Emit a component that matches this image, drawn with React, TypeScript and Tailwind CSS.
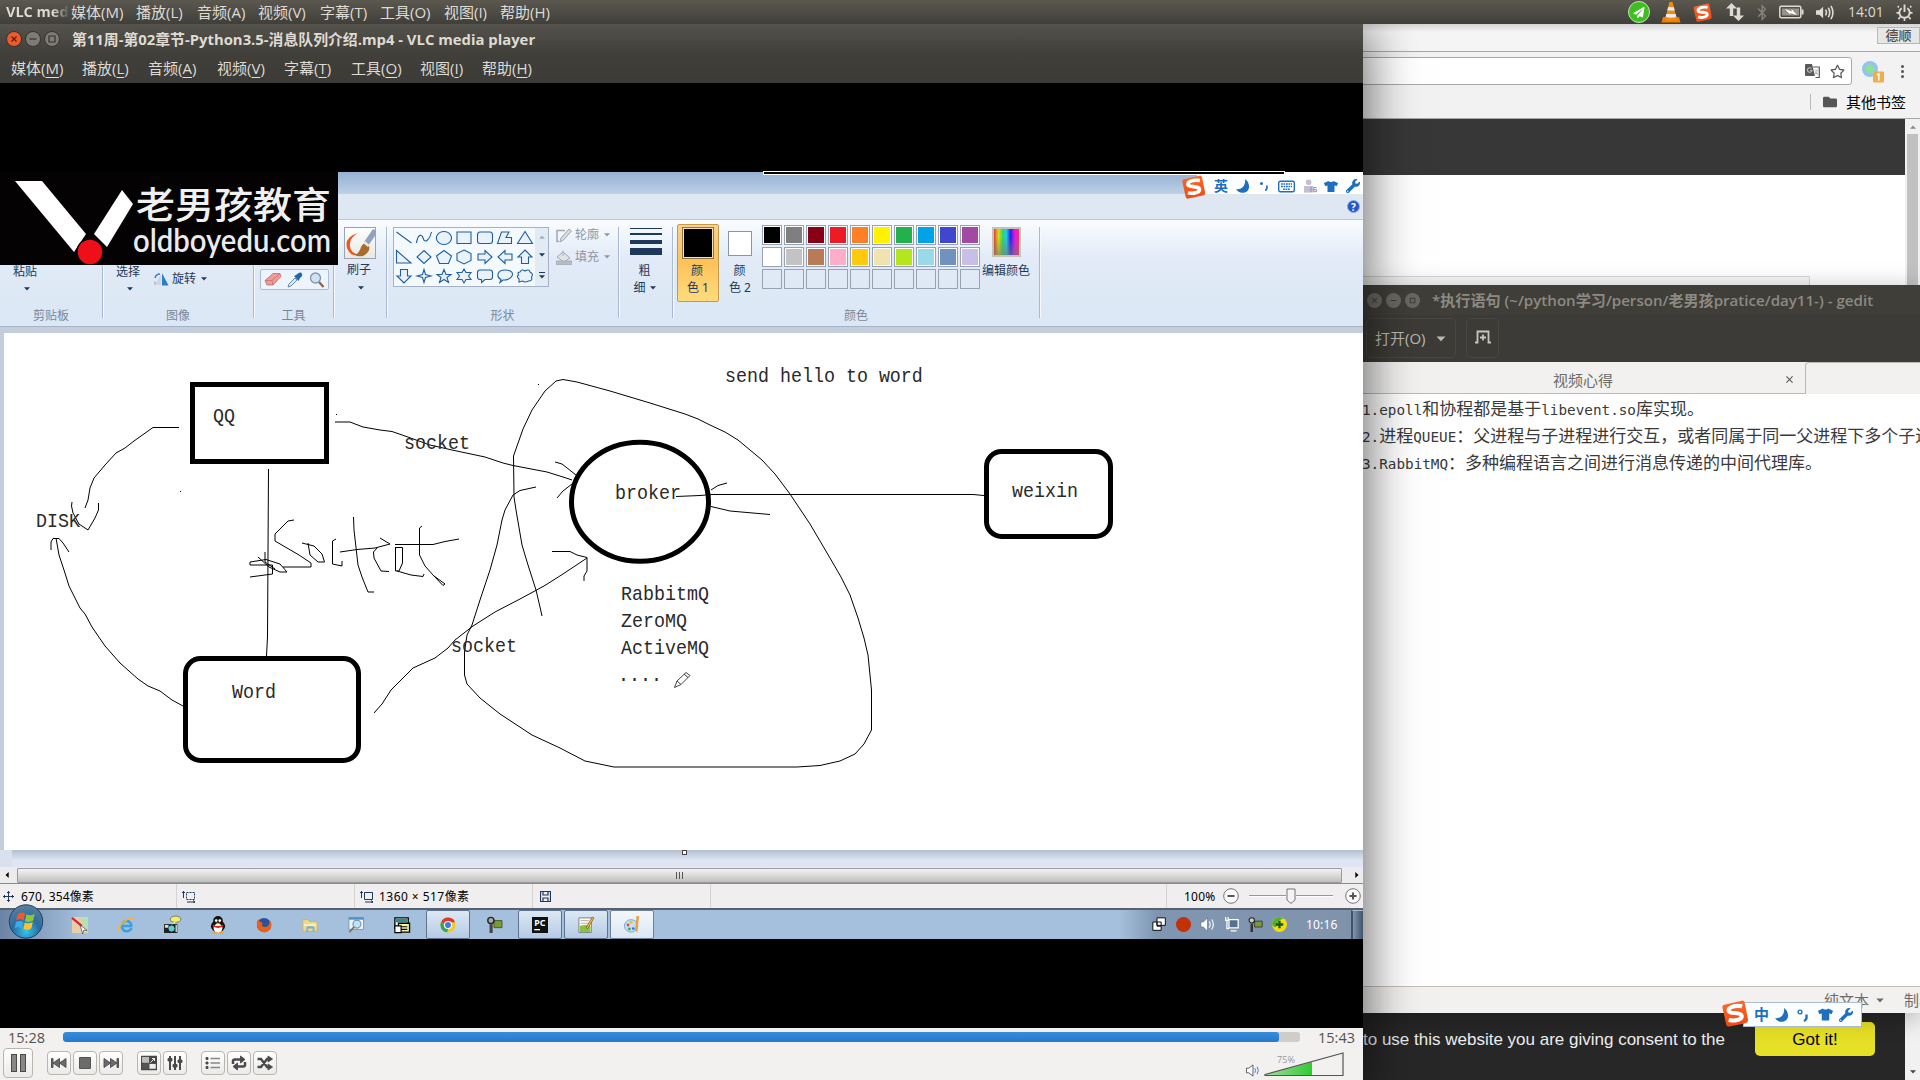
import React from "react";
import { FaTshirt, FaWrench, FaBluetoothB, FaRegStar, FaPaperPlane, FaFolder } from "react-icons/fa";

const UI = "font-['Open_Sans','Noto_Sans_CJK_SC',sans-serif]";
const WIN = "font-['Noto_Sans','Noto_Sans_CJK_SC',sans-serif]";

type IconProps = { className?: string };

function Sogou({ className = "" }: IconProps) {
  return (
    <svg viewBox="0 0 28 28" className={className}>
      <defs>
        <linearGradient id="sg" x1="0" y1="0" x2="0" y2="1">
          <stop offset="0" stopColor="#f9692f" />
          <stop offset="1" stopColor="#f04a12" />
        </linearGradient>
      </defs>
      <path d="M3 5 Q0.500 5.500 1 8 L5 26 Q6 28 8 27.500 L25 24 Q28 23 27.500 20 L24 2.500 Q23 0 21 0.800 Z" fill="url(#sg)" />
      <path d="M21.500 6.500 C13 5 6.500 8 7.500 11.500 C8.500 15 20.500 12 21 16.500 C21.500 20.500 13 22.500 7.500 20.500" fill="none" stroke="#fff" strokeWidth="4.200" />
    </svg>
  );
}

function Moon({ className = "" }: IconProps) {
  return (
    <svg viewBox="0 0 14 14" className={`h-[14px] w-[14px] shrink-0 ${className}`} fill="currentColor">
      <path d="M9 0C15 4 14.500 13.800 6.500 13.800C3.500 13.800 1 12 0.300 10C6 11 10 6 9 0Z" />
    </svg>
  );
}

function Caret({ className = "" }: IconProps) {
  return (
    <svg viewBox="0 0 6 4" className={`h-[4px] w-[6px] shrink-0 ${className}`}>
      <path d="M0 0.300H6L3 3.500Z" fill="currentColor" />
    </svg>
  );
}

/* ---------- Ubuntu panel ---------- */

const panelMenus: [string, string][] = [
  ["媒体(M)", "w-[65px]"],
  ["播放(L)", "w-[61px]"],
  ["音频(A)", "w-[61px]"],
  ["视频(V)", "w-[62px]"],
  ["字幕(T)", "w-[60px]"],
  ["工具(O)", "w-[64px]"],
  ["视图(I)", "w-[56px]"],
  ["帮助(H)", "w-[60px]"],
];

function TopPanel() {
  return (
    <div className={`absolute inset-x-0 top-0 z-20 flex h-[24px] items-center bg-gradient-to-b from-[#5b5850] to-[#403f3a] text-[15px] leading-[24px] text-[#dfdbd2] ${UI}`}>
      <div className="w-[71px] overflow-hidden whitespace-nowrap bg-gradient-to-r from-[#dfdbd2] from-75% to-transparent to-98% bg-clip-text pl-[6px] text-[14.500px] font-bold text-transparent">VLC med</div>
      {panelMenus.map(([t, w]) => (
        <div key={t} className={`${w} shrink-0 whitespace-nowrap`}>{t}</div>
      ))}
      <div className="ml-auto flex items-center">
        <div className="flex h-[22px] w-[22px] items-center justify-center rounded-full border border-[#bfe8b0] bg-[#3fbf1f]">
          <FaPaperPlane className="h-[11px] w-[12px] text-white" />
        </div>
        <svg viewBox="0 0 20 22" className="ml-[11px] h-[22px] w-[20px]">
          <path d="M2 16H18L19.500 21.500H0.500Z" fill="#ef7d00" />
          <path d="M8.500 1H11.500L16 18.500Q10 21 4 18.500Z" fill="#f28a12" />
          <path d="M7.200 6H12.800L13.700 9.500H6.300Z M5.300 13H14.700L15.300 16Q10 17.500 4.700 16Z" fill="#eee" />
        </svg>
        <Sogou className="ml-[12px] h-[19px] w-[19px]" />
        <svg viewBox="0 0 18 18" className="ml-[14px] h-[18px] w-[18px]" fill="#dfdbd2">
          <path d="M5.500 0L11 5.500H7.200V13H3.800V5.500H0Z M12.500 18L18 12.500H14.200V4.500H10.800V12.500H7Z" />
        </svg>
        <FaBluetoothB className="ml-[12px] h-[17px] w-[12px] text-[#85827a]" />
        <svg viewBox="0 0 25 14" className="ml-[11px] h-[14px] w-[25px]">
          <rect x="0.800" y="1.300" width="21" height="11.400" rx="1.500" fill="none" stroke="#dfdbd2" strokeWidth="1.500" />
          <rect x="3" y="3.500" width="17" height="7" fill="#96938b" />
          <path d="M22.500 4.500H24.500V9.500H22.500Z" fill="#dfdbd2" />
          <path d="M6 4L13 6.500L12.500 4L18 10L11 8L11.500 10Z" fill="#fff" />
        </svg>
        <svg viewBox="0 0 20 18" className="ml-[11px] h-[17px] w-[20px]" fill="none" stroke="#dfdbd2" strokeWidth="1.700">
          <path d="M0.500 6.500H4L8 3V15L4 11.500H0.500Z" fill="#dfdbd2" stroke="none" />
          <path d="M10.500 6Q12.500 9 10.500 12M13.500 4Q16.500 9 13.500 14M16.300 2Q20.500 9 16.300 16" />
        </svg>
        <span className="ml-[13px] w-[36px] whitespace-nowrap text-[14px]">14:01</span>
        <svg viewBox="0 0 18 18" className="ml-[12px] mr-[7px] h-[17px] w-[17px]" fill="none" stroke="#dfdbd2" strokeWidth="2">
          <path d="M6 4.500A5.500 5.500 0 1 0 12 4.500M9 0.500V8.500" />
          <path d="M3 3.500L1.800 2.300M15 3.500L16.200 2.300M3.500 9.500H0.500M14.500 9.500H17.500M4.500 14L2.500 16M13.500 14L15.500 16M9 15V18" strokeWidth="1.800" />
        </svg>
      </div>
    </div>
  );
}

/* ---------- Browser behind ---------- */

function Browser() {
  return (
    <div className="absolute left-[1340px] top-[24px] flex h-[1056px] w-[580px] flex-col bg-[#f2f2f2]">
      <div className="flex h-[28px] items-start justify-end border-b border-[#a8a8a8] bg-gradient-to-b from-[#d4d4d4] to-[#f5f5f5] to-30%">
        <div className={`mt-[3px] flex h-[17px] w-[43px] items-center justify-center border border-[#b8b8b8] bg-[#e6e6e6] text-[13px] font-medium leading-none text-[#4f4f4f] ${WIN}`}>德顺</div>
      </div>
      <div className="flex h-[38px] items-center">
        <div className="flex h-[28px] w-[512px] items-center justify-end rounded-r-[3px] border border-[#a8a8a8] bg-white">
          <svg viewBox="0 0 15 15" className="h-[15px] w-[15px]">
            <path d="M1 0H7L10 12H1Q0 12 0 11V1Q0 0 1 0Z" fill="#5a5a5a" />
            <path d="M8 3H14.300V13.500H10.500" fill="none" stroke="#5a5a5a" strokeWidth="1.200" />
            <path d="M6.500 4.500A2.300 2.300 0 1 0 7 6.500H5M9.500 6H13.500M12.500 6Q12 9 9.500 10.500M10 7.500L13 10.500" fill="none" stroke="#bbb" strokeWidth="1.100" />
          </svg>
          <FaRegStar className="ml-[10px] mr-[6px] h-[15px] w-[15px] text-[#5a5a5a]" />
        </div>
        <svg viewBox="0 0 24 24" className="ml-[9px] h-[24px] w-[24px]">
          <circle cx="9" cy="10" r="8" fill="#94c4ee" />
          <circle cx="9" cy="10" r="4.500" fill="#8be39a" />
          <rect x="12" y="12.500" width="11" height="11" rx="1" fill="#f0ad4e" />
          <path d="M16 16L17.800 14.800V21.500" fill="none" stroke="#fff" strokeWidth="1.500" />
        </svg>
        <div className="ml-[16px] flex flex-col gap-[2px]">
          <i className="h-[3px] w-[3px] rounded-full bg-[#555]" />
          <i className="h-[3px] w-[3px] rounded-full bg-[#555]" />
          <i className="h-[3px] w-[3px] rounded-full bg-[#555]" />
        </div>
      </div>
      <div className="flex h-[29px] items-center justify-end border-b border-[#a8a8a8] pb-[5px] pr-[14px]">
        <i className="mr-[12px] h-[16px] w-px bg-[#bbb]" />
        <FaFolder className="mr-[9px] h-[14px] w-[14px] text-[#555]" />
        <span className={`text-[15px] leading-[24px] text-black ${WIN}`}>其他书签</span>
      </div>
      <div className="flex h-[961px]">
        <div className="flex w-[565px] flex-col bg-white">
          <div className="h-[56px] bg-[#373737]" />
          <div className="h-[101px]" />
          <div className="h-[40px] w-[470px] border-r border-t border-[#d8d8d8] bg-[#f8f8f8]" />
          <div className="mt-auto flex h-[67px] items-start bg-[#272727]">
            <span className="ml-[23px] mt-[17px] whitespace-nowrap font-['Liberation_Sans',sans-serif] text-[17px] leading-[20px] text-[#eee]">to use this website you are giving consent to the</span>
            <div className="ml-auto mr-[30px] mt-[9px] flex h-[34px] w-[120px] items-center justify-center rounded-[5px] bg-[#e6e026] pt-[2px] font-['Liberation_Sans',sans-serif] text-[17px] text-black">Got it!</div>
          </div>
        </div>
        <div className="flex w-[15px] flex-col items-center bg-[#f1f1f1]">
          <Caret className="mt-[6px] rotate-180 text-[#8a8a8a]" />
          <div className="mt-[5px] h-[500px] w-[11px] bg-[#c1c1c1]" />
          <Caret className="mb-[6px] mt-auto text-[#444]" />
        </div>
      </div>
    </div>
  );
}

/* ---------- gedit ---------- */

function Seg({ children }: { children: React.ReactNode }) {
  return <span className="font-['DejaVu_Sans_Mono',monospace] text-[14.300px] leading-[20px]">{children}</span>;
}

function Gedit() {
  const dot = "flex h-[15px] w-[15px] items-center justify-center rounded-full bg-[#696862]";
  return (
    <div className={`absolute left-[1363px] top-[285px] flex h-[728px] w-[557px] flex-col bg-white shadow-[0_4px_24px_rgba(0,0,0,0.28)] ${UI}`}>
      <div className="flex h-[30px] shrink-0 items-center overflow-hidden bg-[#3f3e39] pl-[4px]">
        <div className="flex gap-[4px]">
          {["M2 2L6 6M6 2L2 6", "M1.500 4H6.500", "M2 2H6V6H2Z"].map((d) => (
            <i key={d} className={dot}>
              <svg viewBox="0 0 8 8" className="h-[9px] w-[9px]" fill="none" stroke="#3c3b37" strokeWidth="0.900"><path d={d} /></svg>
            </i>
          ))}
        </div>
        <span className="ml-[12px] whitespace-nowrap text-[15.100px] font-semibold leading-[28px] text-[#8d8a82]">*执行语句 (~/python学习/person/老男孩pratice/day11-) - gedit</span>
      </div>
      <div className="flex h-[47px] shrink-0 items-start bg-[#3c3b37] pt-[3px] text-[#bdb9b0]">
        <div className="ml-[3px] flex h-[40px] w-[90px] items-center rounded-[5px] border border-[#484741] pl-[8px] text-[15px]">
          打开(O)<Caret className="ml-[10px] mt-[2px] !h-[6px] !w-[10px]" />
        </div>
        <div className="ml-[10px] flex h-[40px] w-[33px] items-center justify-center rounded-[5px] border border-[#484741] pb-[2px]">
          <svg viewBox="0 0 16 14" className="h-[14px] w-[16px]" fill="none" stroke="#c9c5bc" strokeWidth="1.800"><path d="M0 12.500H2.500V1.500H13.500V12.500H16M8 4.500V10.500M5 7.500H11" /></svg>
        </div>
      </div>
      <div className="flex h-[32px] shrink-0 bg-[#f2f1f0]">
        <div className="flex w-[442px] items-center border-b border-[#bdb9b3] pl-[190px] text-[15px] text-[#6e6c68]">
          <span className="mt-[4px] leading-[20px]">视频心得</span>
          <svg viewBox="0 0 8 8" className="ml-auto mr-[12px] mt-[3px] h-[7px] w-[7px]" stroke="#555" strokeWidth="1.200"><path d="M0.500 0.500L7.500 7.500M7.500 0.500L0.500 7.500" /></svg>
        </div>
        <div className="flex-1 rounded-tl-[4px] border-l border-t border-[#bdb9b3]" />
      </div>
      <div className="min-h-0 flex-1 overflow-hidden text-[17px] leading-[27px] text-[#3a3a3a]">
        <div className="-ml-px mt-px h-[27px] whitespace-nowrap"><Seg>1.epoll</Seg>和协程都是基于<Seg>libevent.so</Seg>库实现。</div>
        <div className="-ml-px h-[27px] whitespace-nowrap"><Seg>2.</Seg>进程<Seg>QUEUE</Seg>：父进程与子进程进行交互，或者同属于同一父进程下多个子进程</div>
        <div className="-ml-px h-[27px] whitespace-nowrap"><Seg>3.RabbitMQ</Seg>：多种编程语言之间进行消息传递的中间代理库。</div>
      </div>
      <div className="flex h-[27px] shrink-0 items-center overflow-hidden whitespace-nowrap border-t border-[#c5bfb9] bg-[#f2f1f0] text-[15px] text-[#6e6c68]">
        <span className="ml-[461px] w-[45px] shrink-0">纯文本</span>
        <Caret className="ml-[6px] !h-[5px] !w-[10px]" />
        <span className="ml-[19px] shrink-0">制表符宽度</span>
      </div>
    </div>
  );
}

function ImeBar() {
  return (
    <div className="absolute left-[1721px] top-[999px] z-10 flex h-[28px] w-[141px] items-end">
      <Sogou className="z-10 h-[27px] w-[28px] shrink-0" />
      <div className={`-ml-[6px] flex h-[25px] w-[119px] items-center border border-[#a9bcd0] bg-[#fcfdff] pl-[10px] text-[#1d6fc0] ${WIN}`}>
        <span className="w-[21px] shrink-0 text-[15px] font-bold leading-none">中</span>
        <Moon />
        <svg viewBox="0 0 12 14" className="ml-[8px] h-[14px] w-[12px] shrink-0"><circle cx="3" cy="4" r="1.900" fill="none" stroke="currentColor" strokeWidth="1.400" /><path d="M9.500 6.500V10Q9.500 12 7 13" fill="none" stroke="currentColor" strokeWidth="2.400" /></svg>
        <FaTshirt className="ml-[9px] h-[15px] w-[15px] shrink-0" />
        <FaWrench className="ml-[6px] h-[14px] w-[14px] shrink-0 -scale-x-100 rotate-90" />
      </div>
    </div>
  );
}

/* ---------- VLC ---------- */

const vlcMenus: [string, string, string][] = [
  ["媒体", "M", "w-[71px]"],
  ["播放", "L", "w-[66px]"],
  ["音频", "A", "w-[69px]"],
  ["视频", "V", "w-[67px]"],
  ["字幕", "T", "w-[67px]"],
  ["工具", "O", "w-[69px]"],
  ["视图", "I", "w-[62px]"],
  ["帮助", "H", "w-[60px]"],
];

function VlcHeader() {
  const b = "flex h-[16px] w-[16px] items-center justify-center rounded-full border border-[#33322e]";
  return (
    <div className={`flex h-[59px] shrink-0 flex-col bg-gradient-to-b from-[#55534c] via-[#403f3a] to-[#3c3b37] text-[#dfdbd2] ${UI}`}>
      <div className="flex h-[29px] items-center pl-[6px]">
        <div className="flex gap-[3px]">
          <i className={`${b} bg-[#ee5a2b]`}><svg viewBox="0 0 8 8" className="h-[8px] w-[8px]" stroke="#5d1f0a" strokeWidth="1.300"><path d="M1.500 1.500L6.500 6.500M6.500 1.500L1.500 6.500" /></svg></i>
          <i className={`${b} bg-[#7d7b73]`}><svg viewBox="0 0 8 8" className="h-[8px] w-[8px]" stroke="#33322e" strokeWidth="1.200"><path d="M0.500 4H7.500" /></svg></i>
          <i className={`${b} bg-[#7d7b73]`}><svg viewBox="0 0 8 8" className="h-[8px] w-[8px]" fill="none" stroke="#33322e" strokeWidth="1.200"><path d="M1 1H7V7H1Z" /></svg></i>
        </div>
        <span className="ml-[12px] mt-px whitespace-nowrap text-[14.850px] font-bold leading-[20px]">第11周-第02章节-Python3.5-消息队列介绍.mp4 - VLC media player</span>
      </div>
      <div className="flex h-[29px] items-center pl-[11px] text-[15px] leading-[24px]">
        {vlcMenus.map(([t, k, w]) => (
          <div key={k} className={`${w} whitespace-nowrap`}>{t}(<span className="underline underline-offset-[3px]">{k}</span>)</div>
        ))}
      </div>
    </div>
  );
}

function Group({ w, label, children }: { w: string; label: string; children?: React.ReactNode }) {
  return (
    <div className={`${w} mt-[7px] flex h-[91px] shrink-0 flex-col border-r border-[#a9bad0] shadow-[1px_0_0_#f6f9fd]`}>
      <div className="h-[79px] shrink-0">{children}</div>
      <div className="h-[20px] text-center text-[12px] leading-[20px] text-[#7a8799]">{label}</div>
    </div>
  );
}

const shapes = [
  "M0.500 1L15.500 12", "M0.500 12C2 2 6 3 7.500 8S14 8 15.500 1", "M8 0.500A7.500 6.500 0 1 1 7.900 0.500Z", "M1 1H15V12.500H1Z", "M3 1H13Q15.500 1 15.500 4V10Q15.500 12.500 13 12.500H3Q0.500 12.500 0.500 10V4Q0.500 1 3 1Z", "M0.500 12.500L4.500 1H12L9 6.500H14.500V12.500Z", "M8 0.500L15.500 12.500H0.500Z",
  "M0.500 0.500V13L15 13Z", "M8 0.500L15 7L8 13.500L1 7Z", "M8 0.500L15.500 6L12.500 13.500H3.500L0.500 6Z", "M8 0L15 3.500V10.500L8 14L1 10.500V3.500Z", "M1 4H8V0.500L15 7L8 13.500V10H1Z", "M15 4H8V0.500L1 7L8 13.500V10H15Z", "M8 0L15 7H11.500V13.500H4.500V7H1Z",
  "M8 14L1 7H4.500V0.500H11.500V7H15Z", "M8 0.500L9.500 5.500L15 7L9.500 8.500L8 13.500L6.500 8.500L1 7L6.500 5.500Z", "M8 0.500L10 5.500H15L11 8.500L12.500 13.500L8 10.500L3.500 13.500L5 8.500L1 5.500H6Z", "M8 0L10 3.500H15L12.500 7L15 10.500H10L8 14L6 10.500H1L3.500 7L1 3.500H6Z", "M3 1H13Q15.500 1 15.500 3.500V8Q15.500 10.500 13 10.500H8L4.500 13.500V10.500H3Q0.500 10.500 0.500 8V3.500Q0.500 1 3 1Z", "M4 10.500C-1 8 0 1 8 1S16 5 15 7S10 11.500 6 11L3 13.500Z", "M3 3Q5 -0.500 8 2Q12 -0.500 13 3Q17 5 14.500 8Q16 12 11.500 12Q8 14 5.500 12L2 13V10Q-1 7.500 1.500 6Q0 3 3 3Z",
];

const palette = [
  ["bg-[#000000]", "bg-[#7f7f7f]", "bg-[#880015]", "bg-[#ed1c24]", "bg-[#ff7f27]", "bg-[#fff200]", "bg-[#22b14c]", "bg-[#00a2e8]", "bg-[#3f48cc]", "bg-[#a349a4]"],
  ["bg-[#ffffff]", "bg-[#c3c3c3]", "bg-[#b97a57]", "bg-[#ffaec9]", "bg-[#ffc90e]", "bg-[#efe4b0]", "bg-[#b5e61d]", "bg-[#99d9ea]", "bg-[#7092be]", "bg-[#c8bfe7]"],
];

function Ribbon() {
  return (
    <div className="flex h-[108px] shrink-0 border-b border-t border-[#a7b4c6] border-t-[#bcc6d6] bg-gradient-to-b from-[#fafdff] via-[#e2ebf7] via-35% to-[#dbe7f5] text-[12px] leading-[16px] text-[#1e395b]">
      <Group w="w-[103px]" label="剪贴板">
        <div className="flex flex-col pl-[13px] pr-[40px] pt-[37px]">
          <span className="h-[16px]">粘贴</span>
          <Caret className="ml-[11px] mt-[7px]" />
        </div>
      </Group>
      <Group w="w-[151px]" label="图像">
        <div className="flex pl-[13px] pt-[37px]">
          <div className="flex w-[24px] flex-col items-center whitespace-nowrap">
            <span className="h-[16px]">选择</span>
            <Caret className="ml-[4px] mt-[7px]" />
          </div>
          <div className="ml-[14px] mt-[7px] flex h-[16px] items-center">
            <svg viewBox="0 0 15 14" className="h-[14px] w-[15px]">
              <path d="M0 13V9L6 13Z" fill="#b9c3cf" /><path d="M8 1V13.500H14.500Z" fill="#2d7fc0" /><path d="M7 2V13H1Z" fill="#cfd8e2" /><path d="M1 6Q2 2 6 2" fill="none" stroke="#3b7fc4" strokeWidth="1.500" />
            </svg>
            <span className="ml-[3px]">旋转</span>
            <Caret className="ml-[5px]" />
          </div>
        </div>
      </Group>
      <Group w="w-[80px]" label="工具">
        <div className="flex pl-[6px] pt-[42px]">
          <div className="flex h-[21px] w-[69px] items-center justify-around rounded-[2px] border border-[#aebccf] bg-[#eef4fb]">
            <svg viewBox="0 0 18 14" className="h-[15px] w-[18px]"><path d="M1 8L9 1H16L17 4L9 12.500H3Z" fill="#ee9c98" stroke="#c46a66" strokeWidth="0.800" /><path d="M1 8H8L9 12.500M8 8L16 1" stroke="#c46a66" strokeWidth="0.700" fill="none" /></svg>
            <svg viewBox="0 0 16 16" className="h-[16px] w-[16px]"><path d="M1 15L2 12L8 6L10 8L4 14Z" fill="#dfe9f5" stroke="#5c7da5" strokeWidth="0.900" /><path d="M7 4L9 3L11 1.500Q14 -0.500 15 2Q16 4 13 6L11.500 9Z" fill="#1e66b5" /></svg>
            <svg viewBox="0 0 16 16" className="h-[16px] w-[16px]"><path d="M10 10L14.500 15" stroke="#8a6b4e" strokeWidth="2.400" /><circle cx="6.500" cy="6" r="5" fill="#cfe3f5" stroke="#8394a8" strokeWidth="1.300" /></svg>
          </div>
        </div>
      </Group>
      <Group w="w-[53px]" label="">
        <div className="flex flex-col items-center pr-px">
          <div className="h-[32px] w-[32px] border border-[#9aa5b3] bg-gradient-to-b from-white to-[#e6e9e2]">
            <svg viewBox="0 0 30 30" className="h-[30px] w-[30px]">
              <path d="M13 5Q-1 9 2 20Q5 29 15 27Q5 25 5 18Q4 10 13 5Z" fill="#f0561d" />
              <path d="M19 14L28 1L30 2V8L23 18Z" fill="#8fa3bd" /><path d="M16 19Q20 12 24 18Q26 24 18 28Q12 29 10 27Q15 24 16 19Z" fill="#a86d2d" /><path d="M18 15L20 13L24.500 17L23 19Z" fill="#e8e8ea" />
            </svg>
          </div>
          <span className="mt-[3px] h-[16px] pr-px">刷子</span>
          <Caret className="ml-[3px] mt-[8px]" />
        </div>
      </Group>
      <Group w="w-[232px]" label="形状">
        <div className="flex pl-[6px]">
          <div className="flex h-[60px] w-[156px] border border-[#a3b2c8] bg-[#f4f9fe]">
            <div className="grid w-[141px] grid-cols-7 grid-rows-3 place-items-center">
              {shapes.map((d, i) => (
                <svg key={i} viewBox="0 0 16 14" className="h-[14px] w-[16px] overflow-visible" fill="#e9f2fb" stroke="#1f5fa0" strokeWidth="1.100"><path d={d} fill={i < 2 ? "none" : undefined} /></svg>
              ))}
            </div>
            <div className="flex w-[13px] flex-col items-center justify-around bg-[#e2eaf4]">
              <Caret className="rotate-180 text-[#a5b0bf]" />
              <Caret />
              <div className="flex flex-col items-center gap-[2px]"><i className="h-px w-[6px] bg-[#1e395b]" /><Caret /></div>
            </div>
          </div>
          <div className="ml-[7px] flex flex-col gap-[6px] text-[#9097a1]">
            <div className="flex items-center">
              <svg viewBox="0 0 16 15" className="h-[15px] w-[16px]" fill="none" stroke="#a1a7b0"><path d="M9 2.500H1V13.500H3" strokeWidth="1.500" /><path d="M4 14L5 10L13 1L15.500 3L7.500 12Z" fill="#d7dce4" /></svg>
              <span className="ml-[3px]">轮廓</span><Caret className="ml-[5px]" />
            </div>
            <div className="flex items-center">
              <svg viewBox="0 0 16 15" className="h-[15px] w-[16px]"><path d="M1 7L7 2L14 8L8 12Z" fill="#dfe4eb" stroke="#a1a7b0" /><path d="M7 6V0.500M0 11H16V15H0Z" stroke="#a1a7b0" fill="#b7bdc6" strokeWidth="0.800" /></svg>
              <span className="ml-[3px]">填充</span><Caret className="ml-[5px]" />
            </div>
          </div>
        </div>
      </Group>
      <Group w="w-[54px]" label="">
        <div className="flex flex-col items-center pt-px">
          <div className="flex w-[32px] flex-col">
            <i className="h-px bg-[#1e395b]" /><i className="mt-[4px] h-[2px] bg-[#1e395b]" /><i className="mt-[5px] h-[4px] bg-[#1e395b]" /><i className="mt-[4px] h-[7px] bg-[#1e395b]" />
          </div>
          <span className="mr-[2px] mt-[8px] h-[16px]">粗</span>
          <div className="mr-[2px] mt-px flex items-center">细<Caret className="ml-[4px]" /></div>
        </div>
      </Group>
      <Group w="w-[367px]" label="颜色">
        <div className="flex items-start pl-[4px]">
          <div className="-mt-[3px] flex h-[78px] w-[42px] flex-col items-center rounded-[2px] border border-[#c29a4a] bg-gradient-to-b from-[#f9d08b] via-[#fdc25a] to-[#ffdc7e] pt-[2px]">
            <div className="h-[32px] w-[32px] border border-[#8b7440] bg-black outline outline-1 -outline-offset-2 outline-[#f5e0b8]" />
            <span className="mr-[2px] mt-[4px] h-[17px]">颜</span>
            <span className="h-[16px]">色 1</span>
          </div>
          <div className="ml-[4px] flex w-[34px] flex-col items-center pt-[4px]">
            <div className="h-[25px] w-[24px] border border-[#8a94a3] bg-white" />
            <span className="mr-px mt-[7px] h-[17px]">颜</span>
            <span className="h-[16px]">色 2</span>
          </div>
          <div className="-mt-[2px] ml-[5px] flex flex-col gap-[2px]">
            {[0, 1, 2].map((r) => (
              <div key={r} className="flex gap-[2px]">
                {palette[0].map((_, c) => (
                  <div key={c} className="flex h-[20px] w-[20px] border border-[#98a2b2] p-px">
                    {r < 2 ? <i className={`h-[16px] w-[16px] ${palette[r][c]} outline outline-1 outline-white`} /> : null}
                  </div>
                ))}
              </div>
            ))}
          </div>
          <div className="ml-px flex w-[50px] flex-col items-center whitespace-nowrap">
            <div className="h-[30px] w-[29px] border-2 border-[#c9c1b6] bg-[linear-gradient(90deg,#e0402a,#d8d820_18%,#2fd860_35%,#22c8e8_50%,#2a20e8_66%,#e818e0_84%,#f03070)]">
              <div className="h-full w-full bg-gradient-to-b from-transparent from-30% to-[#77777799]" />
            </div>
            <span className="mt-[6px] h-[16px]">编辑颜色</span>
          </div>
        </div>
      </Group>
    </div>
  );
}

function PaintHeader() {
  return (
    <div className="relative flex shrink-0 flex-col">
      <div className="flex h-[22px] justify-end bg-gradient-to-b from-[#96b1d2] to-[#bdd0e8]">
        <div className="flex h-[22px] items-start bg-gradient-to-r from-transparent from-10% to-white to-10%">
          <Sogou className="z-10 mt-[3px] h-[24px] w-[29px] shrink-0" />
          <div className="mt-[4px] flex h-[20px] w-[155px] items-center text-[#1d6fc0]">
            <span className="ml-[6px] w-[22px] shrink-0 text-[14px] font-bold leading-none">英</span>
            <Moon />
            <svg viewBox="0 0 12 14" className="ml-[9px] h-[14px] w-[10px] shrink-0"><circle cx="3" cy="4" r="1.800" fill="currentColor" /><path d="M9.500 6.500V9.500Q9.500 11 7.500 12.500" fill="none" stroke="currentColor" strokeWidth="2" /></svg>
            <svg viewBox="0 0 17 12" className="ml-[9px] h-[13px] w-[17px] shrink-0"><rect x="0.700" y="0.700" width="15.600" height="10.600" rx="1.500" fill="none" stroke="#1d6fc0" strokeWidth="1.400" /><path d="M3 3.500H14M3 6H14M5 8.700H12" stroke="#1d6fc0" strokeWidth="1.500" strokeDasharray="1.800 0.700" /></svg>
            <svg viewBox="0 0 16 15" className="ml-[8px] h-[15px] w-[15px] shrink-0" fill="#c2bfd2"><circle cx="6" cy="3" r="3" /><path d="M1 7H11V14H1Z" /><path d="M8.500 8V13.500M14.500 8.500H11.500V13H14.500V10.800H11.500" stroke="#8e8aa8" fill="none" /></svg>
            <FaTshirt className="ml-[6px] h-[15px] w-[14px] shrink-0" />
            <FaWrench className="ml-[8px] h-[14px] w-[14px] shrink-0 -scale-x-100 rotate-90" />
          </div>
        </div>
      </div>
      <div className="flex h-[25px] items-center justify-end bg-[#dfe7f3] pr-[3px]">
        <i className="flex h-[13px] w-[13px] items-center justify-center rounded-full border border-[#8fa9dc] bg-[#2458c9] text-[10px] font-bold not-italic leading-none text-white">?</i>
      </div>
      <div className="absolute -top-px left-[763px] h-[4px] w-[522px] border border-white bg-black" />
      <div className="absolute left-0 top-0 z-10 flex h-[93px] w-[338px] bg-[#050203]">
        <svg viewBox="0 0 133 93" className="h-[93px] w-[133px] shrink-0">
          <path d="M15 9H42L86 62L74 80Z" fill="#fff" /><path d="M122 18L133 32L107 75L94 62Z" fill="#fff" /><circle cx="90" cy="80" r="13" fill="#ee1019" stroke="#050203" strokeWidth="1.500" />
        </svg>
        <svg viewBox="0 0 205 93" className="h-[93px] w-[205px] shrink-0 font-['Lato','Noto_Sans_CJK_SC',sans-serif]">
          <text x="3" y="47" fontSize="37" fontWeight="500" textLength="195" lengthAdjust="spacingAndGlyphs" fill="#f0f0f0">老男孩教育</text>
          <text x="0" y="80" fontSize="32" fontWeight="600" textLength="198" lengthAdjust="spacingAndGlyphs" fill="#ebebeb">oldboyedu.com</text>
        </svg>
      </div>
    </div>
  );
}

function Label({ x, y, children }: { x: number; y: number; children: string }) {
  return (
    <text transform={`translate(${x} ${y}) scale(1 1.080)`} fontSize={18.330} className="whitespace-pre font-['Liberation_Mono',monospace]" fill="#2a2a2a">{children}</text>
  );
}

const strokes = [
  "M268.500 469L267.500 637L266.500 656",
  "M179 427.500H153L134 441L125 448L116 453L105 465L94 478L90 488L88 500L85 508",
  "M72 502L71.500 506L73 513L79 524L88 530L95 518L98.500 510V503",
  "M188 712L183 706L172 700L160 691L148 686L138 679L120 663L105 646L92 627L85 614L80 608L69 586L64 570L59 555L56 538",
  "M51 550V542L53 538.500H59L63 543L69 552",
  "M335 422H350L363 427L380 430L392 431.500L405 436L430 445L452 450L485 457L503 463L513 465.500L547 472L563 477L572 480",
  "M555 462L562 464L576 475M557 498L563 491L572 484",
  "M294 520L288 521L275 534V541L299 555L311 563V567H283",
  "M302 543L314 546L322 554L324.500 562L318 562L310 555L308 543",
  "M336 539L332.500 541V564L342 566V561",
  "M353.500 517L354 530L358 565L362 577L368 592H374M340 552L357 549.500L375 548L390 544L380 538",
  "M377 548L373.500 552L374 558L381 571L389 571.500",
  "M395 547.500H402.500V563L399 571L395.500 571V547.500M397 571L411 575L423 576.500L424 574",
  "M422 526L419.500 528V555L425 566L433 575L443 585.500L445 584L434 576M395 544.500H433L445 541.500L459 539",
  "M250 565V562L266 559.500L280 564L287 572H280L269 567L258 557M250 565H272.500V574L250 577M265 552V562L275 569",
  "M374 713L382 704L391 690L402 679L413 668L435 658L448 648L455 640L473 626L495 612L520 599L544 586L563 574L587 558",
  "M552 551.500H570L577 555L587 557.500V571L584 576V581",
  "M542 616L540 607L536 590L528 565L522 545L516 510L514 497L513.500 456L523 429L532 410L545 391L556 381L563 379.500L577 382L610 391L650 403L685 414L698 419L710 425L725 432L738 440L762 460L775 474L790 494L810 524L830 558L841 577L850 595L858 618L864 638L868 655L871.500 690V730L864 744L855 754L840 761L820 765.500L797 767H614L585 761L560 748L532 735L500 714L480 698L467 684L464.500 675V652L467 635L472 625L480 600L490 570L497 545L502 520L505 510L513 495L520 490.500L536 487",
  "M676 496.500L700 495.500L712 494.500H973L984 495.500",
  "M711 490L718 485.500L727 483M711 506.500L730 511L770 514.500",
];

function Canvas() {
  return (
    <div className="flex h-[523px] shrink-0 flex-col bg-[#c4cddc] pl-[4px] pt-[6px]">
      <svg viewBox="4 333 1359 517" className="h-[517px] w-[1359px] bg-white">
        <g fill="none" stroke="#000" strokeWidth="5">
          <rect x="192.500" y="384.500" width="134" height="77" />
          <rect x="185.500" y="658.500" width="173" height="102" rx="15" />
          <rect x="986.500" y="451.500" width="124" height="85" rx="15" />
          <ellipse cx="640" cy="501.800" rx="68.500" ry="59.500" />
        </g>
        <g fill="none" stroke="#000" strokeWidth="1">
          {strokes.map((d) => <path key={d} d={d} />)}
        </g>
        <path d="M180 491h1v1h-1zM336 414h1v1h-1zM538 384h1v1h-1z" />
        <Label x={213} y={422}>QQ</Label>
        <Label x={36} y={527}>DISK</Label>
        <Label x={232} y={698}>Word</Label>
        <Label x={404} y={449}>socket</Label>
        <Label x={451} y={652}>socket</Label>
        <Label x={615} y={499}>broker</Label>
        <Label x={621} y={600}>RabbitmQ</Label>
        <Label x={621} y={627}>ZeroMQ</Label>
        <Label x={621} y={654}>ActiveMQ</Label>
        <Label x={618} y={681}>....</Label>
        <Label x={725} y={382}>send hello to word</Label>
        <Label x={1012} y={497}>weixin</Label>
        <path d="M674.500 687.500L677 681L686 672.500L690 675.500L681 684.500ZM677 681L681 684.500M684 674L688 677.500" fill="#fff" stroke="#444" />
      </svg>
    </div>
  );
}

function PaintFooter() {
  const cell = "flex h-full items-center border-r border-[#d4d2d2]";
  return (
    <div className="flex shrink-0 flex-col">
      <div className="flex h-[17px] bg-gradient-to-b from-[#b3c0cf] to-[#dfe5f2] to-60%">
        <div className="h-full w-[12px] bg-[#d9e0ef]" />
        <i className="ml-[670px] h-[5px] w-[5px] border border-[#444] bg-white" />
      </div>
      <div className="flex h-[16px] items-center bg-[#ececee]">
        <Caret className="ml-[4px] rotate-90 text-black" />
        <div className="ml-[7px] flex h-[15px] w-[1325px] items-center justify-center gap-[2px] rounded-[1px] border border-[#9a9a9a] bg-gradient-to-b from-[#f3f3f3] via-[#dadada] via-50% to-[#bfbfbf]">
          <i className="h-[7px] w-px bg-[#555]" /><i className="h-[7px] w-px bg-[#555]" /><i className="h-[7px] w-px bg-[#555]" />
        </div>
        <Caret className="ml-[12px] -rotate-90 text-black" />
      </div>
      <div className="flex h-[27px] items-center border-b-2 border-t border-b-[#55616f] border-t-[#8c8c8c] bg-[#f0eeee] text-[12px] leading-[16px] text-black">
        <div className={`${cell} w-[177px] pl-[3px] pt-px`}>
          <svg viewBox="0 0 11 11" className="h-[11px] w-[11px]" fill="none" stroke="#1e395b"><path d="M5.500 0V11M0 5.500H11M4 2L5.500 0.500L7 2M4 9L5.500 10.500L7 9M2 4L0.500 5.500L2 7M9 4L10.500 5.500L9 7" /></svg>
          <span className="ml-[7px] tracking-[0.150px]">670, 354像素</span>
        </div>
        <div className={`${cell} w-[178px] pl-[5px] pt-px`}>
          <svg viewBox="0 0 14 12" className="h-[12px] w-[14px]" fill="none" stroke="#1e395b"><path d="M1.500 0V7M0 2L1.500 0.500L3 2M5 11H13M11 9.500L13 11L11 12" /><path d="M4.500 1.500H12.500V8.500H4.500Z" strokeDasharray="2 1" /></svg>
        </div>
        <div className={`${cell} w-[178px] pl-[5px] pt-px`}>
          <svg viewBox="0 0 14 12" className="h-[12px] w-[14px]" fill="none" stroke="#1e395b"><path d="M1.500 0V7M0 2L1.500 0.500L3 2M5 11H13M11 9.500L13 11L11 12M4.500 1.500H12.500V8.500H4.500Z" /></svg>
          <span className="ml-[5px] tracking-[0.450px]">1360 × 517像素</span>
        </div>
        <div className={`${cell} w-[178px] pl-[7px] pt-px`}>
          <svg viewBox="0 0 11 11" className="h-[11px] w-[11px]" fill="none" stroke="#1e395b" strokeWidth="1.200"><path d="M0.500 0.500H10.500V10.500H0.500ZM3 0.500V4H8V0.500M3 10V7H8V10" /></svg>
        </div>
        <div className={`${cell} w-[456px]`} />
        <span className="ml-[17px] w-[39px] pt-px tracking-[0.200px]">100%</span>
        <svg viewBox="0 0 16 16" className="h-[16px] w-[16px]" fill="#fafafa" stroke="#777"><circle cx="8" cy="8" r="7.300" /><path d="M4.500 8H11.500" strokeWidth="2" stroke="#555" /></svg>
        <div className="ml-[10px] flex h-[17px] w-[84px] items-center justify-center">
          <i className="h-[2px] w-[37px] border-t border-[#999] bg-white" />
          <svg viewBox="0 0 10 16" className="h-[16px] w-[10px]" fill="#f4f4f4" stroke="#777"><path d="M1 1H9V12L5 15.500L1 12Z" /></svg>
          <i className="h-[2px] w-[37px] border-t border-[#999] bg-white" />
        </div>
        <svg viewBox="0 0 16 16" className="ml-[12px] h-[16px] w-[16px]" fill="#fafafa" stroke="#777"><circle cx="8" cy="8" r="7.300" /><path d="M4.500 8H11.500M8 4.500V11.500" strokeWidth="2" stroke="#555" /></svg>
      </div>
    </div>
  );
}

function TaskIcon({ active, bright, children }: { active?: boolean; bright?: boolean; children: React.ReactNode }) {
  const frame = active ? (bright ? "border border-[#6f8199] bg-gradient-to-b from-[#f3f7fb] to-[#dce7f2]" : "border border-[#5f7390] bg-gradient-to-b from-[#dde8f4] to-[#b4cbe4]") : "";
  return (
    <div className="flex w-[46px] justify-center">
      <div className={`flex h-[29px] w-[44px] items-center justify-center rounded-[2px] ${frame}`}>
        <svg viewBox="0 0 18 18" className="h-[16px] w-[16px] overflow-visible">{children}</svg>
      </div>
    </div>
  );
}

function Taskbar() {
  return (
    <div className="flex h-[29px] shrink-0 items-center bg-gradient-to-r from-[#6b84a5] to-[#a5c0dd] to-6%">
      <svg viewBox="0 0 36 36" className="-mt-[6px] ml-[8px] h-[35px] w-[36px] shrink-0">
        <defs><radialGradient id="orb" cx="0.500" cy="0.800" r="0.800"><stop offset="0" stopColor="#35c4ee" /><stop offset="0.500" stopColor="#2a6da0" /><stop offset="1" stopColor="#5d7f9c" /></radialGradient></defs>
        <circle cx="18" cy="18" r="17.200" fill="url(#orb)" stroke="#1d3d5e" />
        <path d="M9 11Q13 7 17 10L15.500 17Q12 14.500 8 17Z" fill="#ee5a2b" /><path d="M18.500 10.500Q22 13 27 10L25.500 17Q21 19.500 17 17.500Z" fill="#8cc63f" /><path d="M7.500 18.500Q11.500 16.500 15 18.500L13.500 25Q10 23 6.500 25Z" fill="#3fa9f0" /><path d="M16.800 19Q20.500 21 25 18.500L23.500 25Q19.500 28 15.200 25.500Z" fill="#fcc42c" />
      </svg>
      <div className="ml-[13px] flex">
        <TaskIcon><path d="M0 0H18V18H0Z" fill="#e9cfa8" /><path d="M9 0H18V18L14 14Z" fill="#b9e0b0" /><path d="M0 1L11 10" stroke="#d5253a" strokeWidth="2.500" /><path d="M9 9L17 15L13 15L12 19Z" fill="#fff" stroke="#333" strokeWidth="0.700" /></TaskIcon>
        <TaskIcon><path d="M15.500 12.500Q12 17.500 7 15.500Q3 12 5 7Q8 3 12 5Q15.500 7.500 15 10H6" fill="none" stroke="#3a9ee0" strokeWidth="2.800" /><path d="M1 16.500Q-1 12 6 6Q13 0 17.500 2" fill="none" stroke="#f2b632" strokeWidth="1.700" /></TaskIcon>
        <TaskIcon><path d="M0 8H15V18H0Z" fill="#222" /><circle cx="8.500" cy="13" r="4" fill="#5dd0cf" stroke="#111" /><path d="M1 9H5V12H1ZM13 9H14.500V17H13Z" fill="#ddd" /><ellipse cx="13" cy="2.500" rx="6" ry="3.500" fill="#f2f06a" stroke="#555" strokeWidth="0.800" /><path d="M11 5.500L8 9L14 5.500Z" fill="#f2f06a" /></TaskIcon>
        <TaskIcon><ellipse cx="9" cy="10.500" rx="8" ry="6.500" fill="#111" /><ellipse cx="9" cy="4.500" rx="5.500" ry="5.500" fill="#111" /><ellipse cx="9" cy="12.500" rx="5" ry="5" fill="#fff" /><path d="M3 8.500Q9 12 15 8.500L14.500 11Q9 13.500 3.500 11Z" fill="#e02222" /><circle cx="7" cy="4" r="1.500" fill="#fff" /><circle cx="11" cy="4" r="1.500" fill="#fff" /><path d="M6 6.500H12L9 8.500ZM3 16.500H8V18.500H3ZM10 16.500H15V18.500H10Z" fill="#f5a11d" /></TaskIcon>
        <TaskIcon><circle cx="9" cy="9" r="8" fill="#26539b" /><path d="M1 6Q0 16 9 17.500Q17.500 17 17.500 8Q17 5 15 3Q16 9 12 11Q8 12 6 9Q9 8 6 6Q3 5 3 2.500Q1 4 1 6Z" fill="#e8601c" /></TaskIcon>
        <TaskIcon><path d="M1 3H7L8.500 5H17V16H1Z" fill="#f2d98a" stroke="#c6a84e" strokeWidth="0.700" /><path d="M2 8H16V10H2Z" fill="#fff3c4" /><path d="M5 17V12Q5 10.500 7 10.500H12Q14 10.500 14 12V17H12V13H7V17Z" fill="#6fb4dc" /></TaskIcon>
        <TaskIcon><path d="M1 0.500H17.500V14H1Z" fill="#eaf4fb" stroke="#6d97bd" /><path d="M1 0.500H17.500V3H1Z" fill="#4f8fc4" /><circle cx="10" cy="8" r="4.500" fill="#bfe2f6" stroke="#7890a8" strokeWidth="1.200" /><path d="M7 11L1.500 17" stroke="#8a7048" strokeWidth="2" /></TaskIcon>
        <TaskIcon><path d="M1 1H16V13H1Z" fill="#fff" stroke="#000" strokeWidth="1.500" /><path d="M2 2H15V6H2Z" fill="#2f8c86" /><path d="M5 7H17.500V17H5Z" fill="#f5f2a0" stroke="#000" strokeWidth="1.500" /><path d="M1 10H8V17.500H1ZM8 11H15M8 14H15" fill="#fff" stroke="#000" strokeWidth="1.300" /></TaskIcon>
        <TaskIcon active><circle cx="9" cy="9" r="8.500" fill="#f5c92c" /><path d="M1.600 5A8.500 8.500 0 0 1 17 6H9L5.500 10Z" fill="#dd3b2c" /><path d="M1.600 4.800L6 12L9.500 12L8 17.500A8.500 8.500 0 0 1 1.600 4.800Z" fill="#3aa64b" /><circle cx="9" cy="9" r="4" fill="#3d7de0" stroke="#fff" strokeWidth="1.200" /></TaskIcon>
        <TaskIcon><path d="M9 4H18V12H9Z" fill="#7a9b30" stroke="#44531d" /><circle cx="5.500" cy="4" r="3.500" fill="#aaa" stroke="#222" strokeWidth="1.500" /><path d="M4 8H7.500V18H4Z" fill="#444" /></TaskIcon>
        <TaskIcon active><path d="M0 0H18V18H0Z" fill="#111" /><text x="2.500" y="10" fontSize="10" fontWeight="bold" fill="#fff">PC</text><path d="M2.500 13.500H9V15H2.500Z" fill="#fff" /></TaskIcon>
        <TaskIcon active><path d="M1 1H15V17.500H1Z" fill="#fbfbf4" stroke="#777" /><path d="M2 10Q8 8 14 10V17H2Z" fill="#86c440" /><path d="M3 4H12M3 7H12" stroke="#aaa" /><path d="M9 12L16 0L18 1L11 13Z" fill="#efc03a" stroke="#7a3c22" strokeWidth="0.700" /></TaskIcon>
        <TaskIcon active bright><ellipse cx="8" cy="10" rx="7.500" ry="7" fill="#c6dff2" stroke="#6ba0cb" /><circle cx="4.500" cy="9" r="1.600" fill="#e34b3c" /><circle cx="8" cy="6" r="1.600" fill="#f3b829" /><circle cx="6" cy="13.500" r="1.600" fill="#3fa552" /><circle cx="10.500" cy="13" r="1.600" fill="#2f7dd0" /><path d="M14 -1H17L15 18L12.500 14Z" fill="#e8a24f" /></TaskIcon>
      </div>
      <div className="ml-auto flex h-full w-[244px] items-center bg-gradient-to-r from-transparent via-[#7f96b2] via-15% to-[#7f93ab] pl-[28px]">
        <div className="flex w-[144px]">
          {[
            <path key="a" d="M6 1H16V10H6ZM1 6H11V16H1ZM6 6V11H11" fill="#fff" stroke="#111" strokeWidth="1.200" />,
            <circle key="b" cx="9" cy="9" r="9" fill="#c23208" />,
            <g key="c"><path d="M1 6H4L9 1V17L4 12H1Z" fill="#fff" stroke="#456" strokeWidth="0.600" /><path d="M11 5Q13.500 9 11 13M14 3Q18 9 14 15" fill="none" stroke="#fff" strokeWidth="1.300" /></g>,
            <g key="d"><path d="M6 3H17V13H6Z" fill="#56708c" stroke="#fff" strokeWidth="1.500" /><path d="M8 16.500H15M2 0V4H5V0M3.500 4V14H6" fill="none" stroke="#fff" strokeWidth="1.500" /></g>,
            <g key="e"><path d="M8 5H17V12H8Z" fill="#7a9b30" stroke="#333" /><circle cx="4.500" cy="4" r="3.200" fill="#ccc" stroke="#222" strokeWidth="1.300" /><path d="M3 8H6V18H3Z" fill="#333" /></g>,
            <g key="f"><circle cx="9" cy="9" r="9" fill="#f4dc10" /><path d="M0 9A9 9 0 0 1 9 0A9 9 0 0 1 14 2Q6 3 5 12Q2 13 0 9Z" fill="#53b22b" /><path d="M9 4.500V13.500M4.500 9H13.500" stroke="#155a18" strokeWidth="2.800" /></g>,
          ].map((icon, i) => (
            <div key={i} className="flex w-[24px] justify-center"><svg viewBox="0 0 18 18" className="h-[15px] w-[15px] overflow-visible">{icon}</svg></div>
          ))}
        </div>
        <span className="ml-[15px] w-[45px] text-[12px] leading-[16px] tracking-[0.150px] text-white">10:16</span>
        <div className="h-full w-[12px] border-l-2 border-t border-[#3f5268] border-t-[#a9b8c8] bg-gradient-to-r from-[#8196ad] to-[#40536a]" />
      </div>
    </div>
  );
}

function CtlButton({ className = "", children }: { className?: string; children: React.ReactNode }) {
  return (
    <div className={`flex h-[24px] w-[24px] items-center justify-center rounded-[4px] border border-[#b9b5af] bg-gradient-to-b from-white to-[#ebeae8] ${className}`}>
      <svg viewBox="0 0 16 16" className="h-[16px] w-[16px]" fill="#6b6b69" stroke="#4a4a48" strokeWidth="0.900">{children}</svg>
    </div>
  );
}

function VlcControls() {
  return (
    <div className={`flex h-[52px] shrink-0 flex-col bg-[#f2f1f0] text-[#55534f] ${UI}`}>
      <div className="flex h-[19px] items-center text-[14.500px]">
        <span className="w-[63px] pl-[8px] pt-px leading-[18px]">15:28</span>
        <div className="-mt-[2px] flex h-[10px] w-[1237px] overflow-hidden rounded-[3px] bg-[#cfcdca]">
          <div className="h-full w-[1216px] rounded-[3px] bg-gradient-to-b from-[#3a8bd9] to-[#2379cd]" />
        </div>
        <span className="ml-[18px] pt-px leading-[18px]">15:43</span>
      </div>
      <div className="flex h-[32px] items-center">
        <div className="ml-[3px] flex h-[30px] w-[30px] items-center justify-center gap-[3px] rounded-[4px] border border-[#b9b5af] bg-gradient-to-b from-white to-[#ebeae8]">
          <i className="h-[18px] w-[6px] border border-[#4a4a48] bg-[#888783]" />
          <i className="h-[18px] w-[6px] border border-[#4a4a48] bg-[#888783]" />
        </div>
        <div className="ml-[14px] flex gap-[2px]">
          <CtlButton><path d="M0.500 3.500H2V12.500H0.500ZM2 8L8.500 3.500V12.500ZM8.500 8L15 3.500V12.500Z" /></CtlButton>
          <CtlButton><path d="M2.500 2.500H13.500V13.500H2.500Z" /></CtlButton>
          <CtlButton><path d="M15.500 3.500H14V12.500H15.500ZM14 8L7.500 3.500V12.500ZM7.500 8L1 3.500V12.500Z" /></CtlButton>
        </div>
        <div className="ml-[14px] flex gap-[2px]">
          <CtlButton><path d="M0.500 1.500H15.500V14.500H0.500Z" fill="#eee" strokeWidth="1.500" /><path d="M1 2H9V7H1Z" fill="#bbb" stroke="none" /><path d="M1 8H8V14H1Z" fill="#555" /><path d="M8.500 2H15V8.500H8.500Z" fill="#444" /><path d="M9.500 7.500L13.500 3.500M11 3.500H13.500V6" stroke="#fff" fill="none" /></CtlButton>
          <CtlButton><path d="M3 1V15M8 1V15M13 1V15" strokeWidth="2" /><path d="M1 3.500H5V6H1ZM6 9.500H10V12H6ZM11 5H15V7.500H11Z" fill="#4a4a48" /></CtlButton>
        </div>
        <div className="ml-[14px] flex gap-[2px]">
          <CtlButton><path d="M1 2.500H3V4.500H1ZM1 7H3V9H1ZM1 11.500H3V13.500H1Z" fill="#4a4a48" /><path d="M5.500 3.500H15M5.500 8H15M5.500 12.500H15" strokeWidth="1.400" stroke="#888" /></CtlButton>
          <CtlButton><path d="M2 9V6Q2 4.500 4 4.500H10M14 7V10Q14 11.500 12 11.500H6" fill="none" strokeWidth="2.500" /><path d="M9.500 1L14 4.500L9.500 8ZM6.500 8L2 11.500L6.500 15Z" fill="#4a4a48" /></CtlButton>
          <CtlButton><path d="M0.500 4H4L10 12H12M0.500 12H4L10 4H12" fill="none" strokeWidth="2.300" /><path d="M11 1L15.500 4L11 7ZM11 9L15.500 12L11 15Z" fill="#4a4a48" /></CtlButton>
        </div>
        <svg viewBox="0 0 15 14" className="ml-auto mt-[14px] h-[13px] w-[15px]" fill="#fff" stroke="#555"><path d="M1 4.500H3.500L8 1V13L3.500 9.500H1Z" /><path d="M10 4.500Q11.500 7 10 9.500M12.500 3Q15 7 12.500 11" fill="none" stroke="#3878c8" /></svg>
        <svg viewBox="0 0 80 25" className="ml-[4px] mr-[19px] mt-[2px] h-[25px] w-[80px]">
          <defs><linearGradient id="vol"><stop offset="0" stopColor="#a5dba5" /><stop offset="1" stopColor="#2ecc2e" /></linearGradient></defs>
          <path d="M1 23L48 10V23.500H1Z" fill="url(#vol)" />
          <path d="M1 22.500L79 1V23.500H1Z" fill="none" stroke="#555" strokeWidth="1.200" />
          <text x="13" y="11" fontSize="9.500" textLength="18" lengthAdjust="spacingAndGlyphs" fill="#999">75%</text>
        </svg>
      </div>
    </div>
  );
}

function Vlc() {
  return (
    <div className="absolute left-0 top-[24px] flex h-[1056px] w-[1363px] flex-col bg-black shadow-[0_8px_48px_4px_rgba(0,0,0,0.6)]">
      <VlcHeader />
      <div className={`flex h-[945px] shrink-0 flex-col pt-[89px] ${WIN}`}>
        <PaintHeader />
        <Ribbon />
        <Canvas />
        <PaintFooter />
        <Taskbar />
      </div>
      <VlcControls />
    </div>
  );
}

export default function App() {
  return (
    <div className="relative h-[1080px] w-[1920px] overflow-hidden bg-black">
      <Browser />
      <Gedit />
      <Vlc />
      <ImeBar />
      <TopPanel />
    </div>
  );
}
